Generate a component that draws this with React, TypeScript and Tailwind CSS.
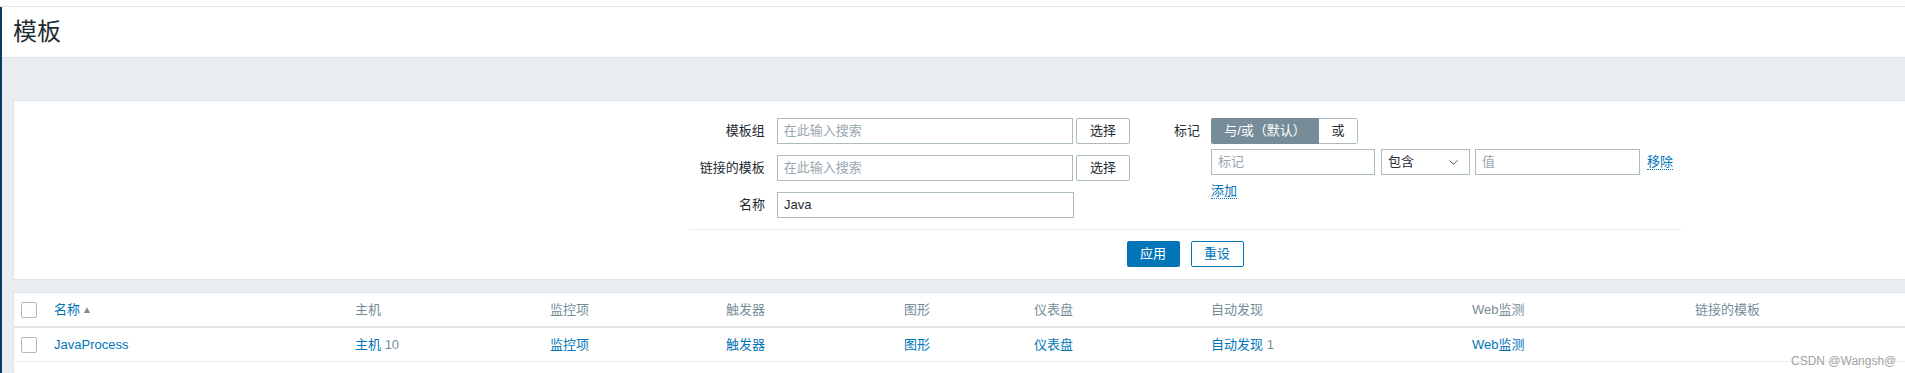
import { ChevronDown } from "lucide-react";

const font = "font-['Liberation_Sans','Noto_Sans_CJK_SC',sans-serif]";

const headers = ["主机", "监控项", "触发器", "图形", "仪表盘", "自动发现", "Web监测", "链接的模板"];

function Checkbox() {
  return <div className="w-4 h-4 rounded-[2px] border border-[#acbbc2] bg-white" />;
}

function TextInput({ value, placeholder, className }: { value?: string; placeholder?: string; className?: string }) {
  return (
    <div className={`h-[26px] border border-[#acbbc2] bg-white px-[6px] flex items-center ${className ?? ""}`}>
      {value ? (
        <span className="text-[#1f2c33]">{value}</span>
      ) : (
        <span className="text-[#9aa7ae]">{placeholder}</span>
      )}
    </div>
  );
}

function SelectButton() {
  return (
    <div className="h-[26px] w-[54px] border border-[#acbbc2] rounded-[2px] bg-white flex items-center justify-center text-[#1f2c33]">
      选择
    </div>
  );
}

function Link({ children }: { children: React.ReactNode }) {
  return (
    <span className="text-[#0275b8] border-b border-dotted border-[#0275b8] leading-[16px]">{children}</span>
  );
}

export default function App() {
  return (
    <div className={`w-[1905px] h-[373px] overflow-hidden bg-white text-[13px] text-[#1f2c33] relative ${font}`}>
      <div className="h-[6px] bg-white" />
      <div className="h-px bg-[#dfe4e7]" />
      <div className="flex h-[366px]">
        {/* sidebar edge */}
        <div className="w-[2px] shrink-0 bg-[#0b3b5c]" />
        <div className="flex-1 flex flex-col overflow-hidden">
          {/* page header */}
          <div className="h-[51px] shrink-0 border-b border-[#dfe4e7] bg-white pl-[11px] flex items-center">
            <h1 className="text-[24px] leading-none text-[#1f2c33] pb-[1px]">模板</h1>
          </div>

          <div className="flex-1 shrink-0 bg-[#ebeef0] pl-[11px] pt-[42px]">
            {/* filter panel */}
            <div className="h-[180px] bg-white border border-r-0 border-[#dfe4e7] pt-[17px]">
              <div className="ml-[675px] w-[992px]">
                <div className="flex">
                  {/* left column */}
                  <div className="w-[441px] flex flex-col gap-[11px]">
                    <div className="flex items-center">
                      <div className="w-[77px] text-right pr-px">模板组</div>
                      <TextInput placeholder="在此输入搜索" className="ml-[11px] w-[297px]" />
                      <div className="ml-[3px]">
                        <SelectButton />
                      </div>
                    </div>
                    <div className="flex items-center">
                      <div className="w-[77px] text-right pr-px">链接的模板</div>
                      <TextInput placeholder="在此输入搜索" className="ml-[11px] w-[297px]" />
                      <div className="ml-[3px]">
                        <SelectButton />
                      </div>
                    </div>
                    <div className="flex items-center">
                      <div className="w-[77px] text-right pr-px">名称</div>
                      <TextInput value="Java" className="ml-[11px] w-[297px]" />
                    </div>
                  </div>

                  {/* right column */}
                  <div className="ml-[44px] flex">
                    <div className="w-[27px] h-[26px] flex items-center">标记</div>
                    <div className="ml-[10px] flex flex-col">
                      <div className="flex h-[26px] w-[147px] rounded-[2px] overflow-hidden">
                        <div className="w-[108px] bg-[#768d99] text-white flex items-center justify-center">
                          与/或（默认）
                        </div>
                        <div className="flex-1 border border-l-0 border-[#acbbc2] rounded-r-[2px] bg-white flex items-center justify-center">
                          或
                        </div>
                      </div>
                      <div className="mt-[5px] flex items-center">
                        <TextInput placeholder="标记" className="w-[164px]" />
                        <div className="ml-[6px] w-[89px] h-[26px] border border-[#acbbc2] bg-white pl-[6px] pr-[8px] flex items-center justify-between">
                          <span>包含</span>
                          <ChevronDown size={15} strokeWidth={1.3} className="text-[#1f2c33]" />
                        </div>
                        <TextInput placeholder="值" className="ml-[5px] w-[165px]" />
                        <div className="ml-[7px]">
                          <Link>移除</Link>
                        </div>
                      </div>
                      <div className="mt-[6px]">
                        <Link>添加</Link>
                      </div>
                    </div>
                  </div>
                </div>

                <div className="mt-[11px] h-px bg-[#ebeef0]" />

                <div className="mt-[11px] flex justify-center gap-[11px]">
                  <div className="w-[53px] h-[26px] rounded-[2px] bg-[#0275b8] text-white flex items-center justify-center">
                    应用
                  </div>
                  <div className="w-[53px] h-[26px] rounded-[2px] border border-[#0275b8] bg-white text-[#0275b8] flex items-center justify-center">
                    重设
                  </div>
                </div>
              </div>
            </div>

            {/* templates table */}
            <div className="mt-[12px] bg-white border-t border-l border-[#dfe4e7] h-[100px]">
              <div className="grid grid-cols-[40px_301px_195px_176px_178px_130px_177px_261px_223px_1fr] h-[35px] border-b-2 border-[#dfe4e7] items-center">
                <div className="pl-[7px]">
                  <Checkbox />
                </div>
                <div className="text-[#0275b8] flex items-center">
                  名称
                  <span className="ml-[2px] text-[10px] text-[#768d99]">▲</span>
                </div>
                {headers.map((h) => (
                  <div key={h} className="text-[#768d99]">
                    {h}
                  </div>
                ))}
              </div>
              <div className="grid grid-cols-[40px_301px_195px_176px_178px_130px_177px_261px_223px_1fr] h-[34px] border-b border-[#ebeef0] items-center">
                <div className="pl-[7px]">
                  <Checkbox />
                </div>
                <div className="text-[#0275b8]">JavaProcess</div>
                <div>
                  <span className="text-[#0275b8]">主机</span>
                  <span className="text-[#768d99]"> 10</span>
                </div>
                <div className="text-[#0275b8]">监控项</div>
                <div className="text-[#0275b8]">触发器</div>
                <div className="text-[#0275b8]">图形</div>
                <div className="text-[#0275b8]">仪表盘</div>
                <div>
                  <span className="text-[#0275b8]">自动发现</span>
                  <span className="text-[#768d99]"> 1</span>
                </div>
                <div className="text-[#0275b8]">Web监测</div>
                <div />
              </div>
            </div>
          </div>
        </div>
      </div>

      {/* watermark */}
      <div className="absolute left-[1791px] top-[352px] text-[12px] text-[#a3a3a3] font-['Liberation_Sans',sans-serif]">
        CSDN @Wangsh@
      </div>
    </div>
  );
}
